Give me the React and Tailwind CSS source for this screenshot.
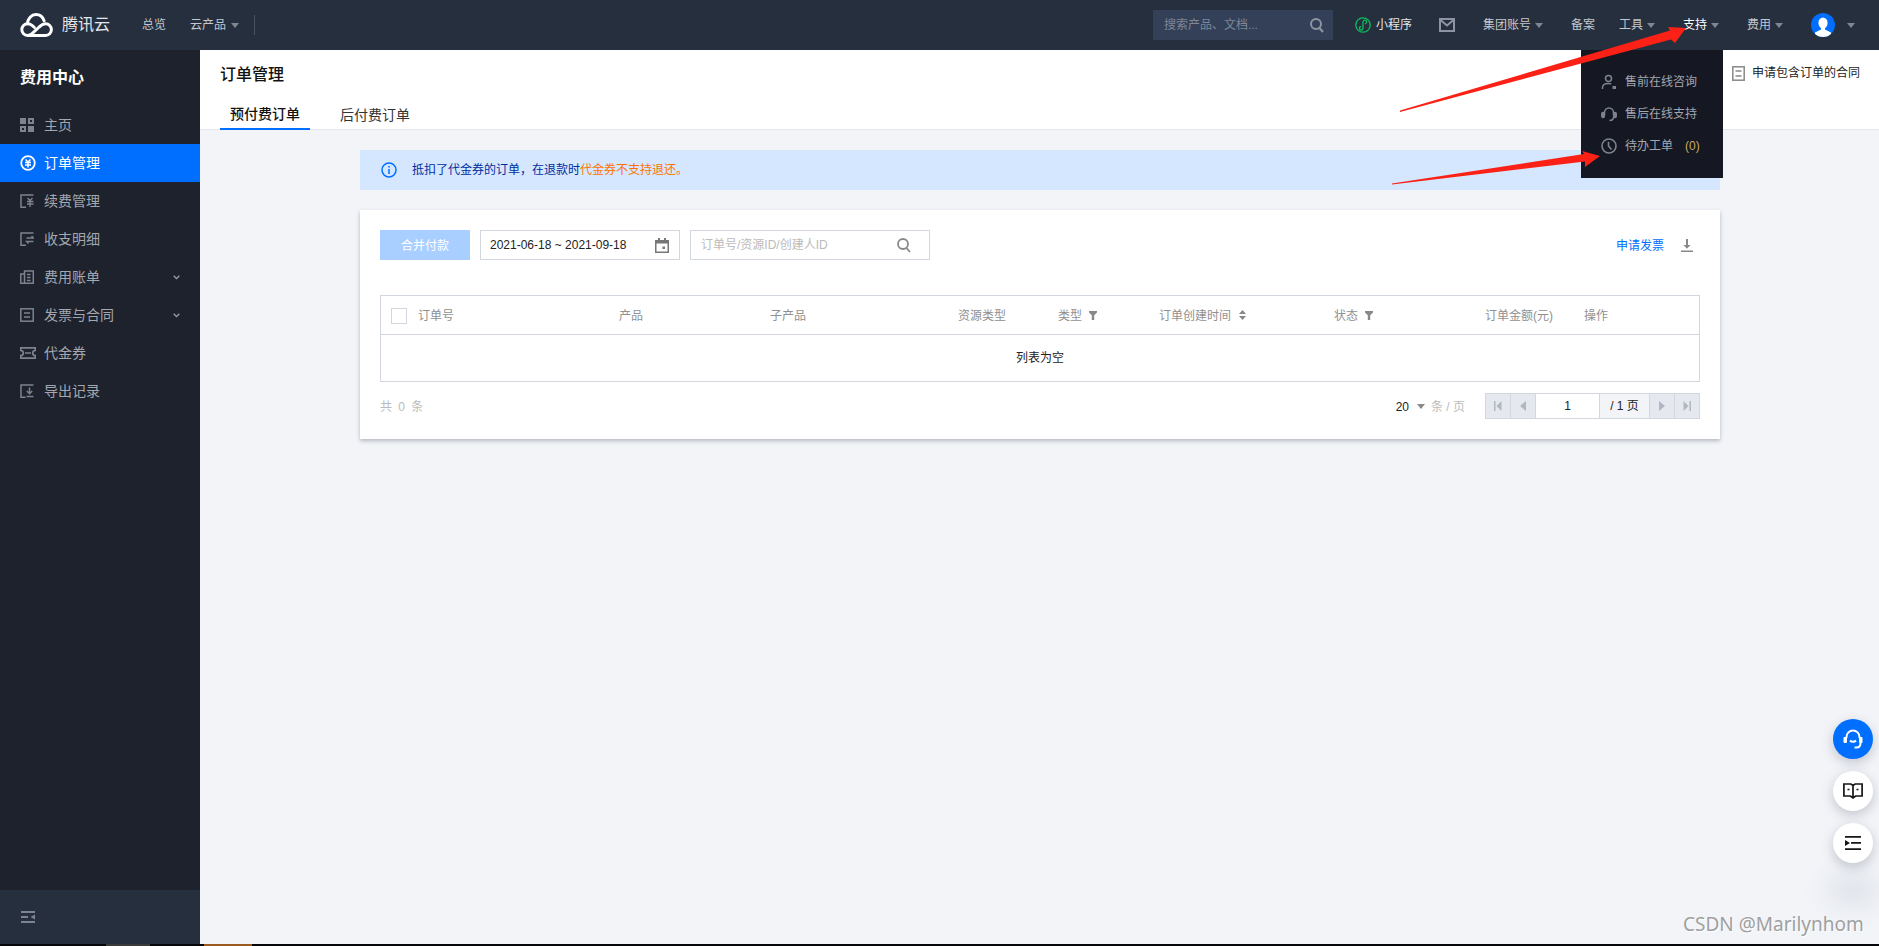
import React from 'react';

const Caret = ({ className = 'border-t-[#7f8691]' }) => (
  <span className={`inline-block w-0 h-0 border-x-[4px] border-x-transparent border-t-[5px] ${className}`} />
);

const Logo = () => (
  <svg width="33" height="24" viewBox="0 0 33 24" fill="none" stroke="white" strokeWidth="3" strokeLinecap="round" strokeLinejoin="round">
    <path d="M7.6 22.4h18a5.8 5.8 0 0 0 0-11.6c-3.2 0-5 1.8-7 3.7l-6.8 6.4c-1.1 1-2.6 1.5-4.2 1.5a5.8 5.8 0 0 1 0-11.6c1.6 0 3 .5 4.4 1.6l2.3 2" />
    <path d="M7.4 10.8C7.8 5.6 11.4 1.6 16 1.6c3.7 0 6.8 2.5 8.1 6.2" />
  </svg>
);

const SideIcon = ({ name }) => {
  const c = '#7d838f';
  if (name === 'home') {
    return (
      <svg width="14" height="14" viewBox="0 0 14 14" fill={c}>
        <rect width="6" height="6" />
        <path fillRule="evenodd" d="M8 0h6v6H8zM10 2v2h2V2z" />
        <path fillRule="evenodd" d="M0 8h6v6H0zM2 10v2h2v-2z" />
        <rect x="8" y="8" width="6" height="6" />
      </svg>
    );
  }
  if (name === 'order') {
    return (
      <svg width="16" height="16" viewBox="0 0 16 16" fill="none" stroke="white">
        <circle cx="8" cy="8" r="6.8" strokeWidth="1.8" />
        <path d="M5.5 4.5 8 7l2.500-2.500M5 7.500h6M5 10h6M8 7v5.500" strokeWidth="1.5" />
      </svg>
    );
  }
  if (name === 'renew') {
    return (
      <svg width="14" height="14" viewBox="0 0 14 14" fill="none" stroke={c} strokeWidth="1.5">
        <path d="M13.5 1H1v12.3h5" />
        <path d="M7.5 4 10 6.5 12.5 4M7 7.5h6.500M7 10h6.500M10 6.500V13" strokeWidth="1.3" />
      </svg>
    );
  }
  if (name === 'detail') {
    return (
      <svg width="14" height="14" viewBox="0 0 14 14" fill="none" stroke={c} strokeWidth="1.5">
        <path d="M13.5 1H1v12.3h5" />
        <path d="M6.5 6h7l-2-2M13.500 9.500h-7l2 2" strokeWidth="1.3" />
      </svg>
    );
  }
  if (name === 'bill') {
    return (
      <svg width="14" height="14" viewBox="0 0 14 14" fill="none" stroke={c} strokeWidth="1.5">
        <path d="M4.5 1h8.800v12.300H.8V4h3.700zM4.500 4v9.300M7 4.500h3.500M7 7.500h3.500M7 10.500h3.500" />
      </svg>
    );
  }
  if (name === 'invoice') {
    return (
      <svg width="14" height="14" viewBox="0 0 14 14" fill="none" stroke={c} strokeWidth="1.5">
        <rect x="0.8" y="0.8" width="12.4" height="12.4" />
        <path d="M4 5h6M4 9h6" />
      </svg>
    );
  }
  if (name === 'voucher') {
    return (
      <svg width="16" height="12" viewBox="0 0 16 12" fill="none" stroke={c} strokeWidth="1.7">
        <path d="M.8.8h14.400v2.700a2.500 2.500 0 0 0 0 5v2.700H.8V8.500a2.500 2.500 0 0 0 0-5zM5 6h6" />
      </svg>
    );
  }
  return (
    <svg width="14" height="14" viewBox="0 0 14 14" fill="none" stroke={c} strokeWidth="1.5">
      <path d="M13.5 1H1v12.3h4.500" />
      <path d="M9.5 3.500V9M6.800 7l2.700 2.700L12.200 7M6.500 12.500h7" />
    </svg>
  );
};

const menu = [
  { name: 'home', label: '主页' },
  { name: 'order', label: '订单管理', active: true },
  { name: 'renew', label: '续费管理' },
  { name: 'detail', label: '收支明细' },
  { name: 'bill', label: '费用账单', arrow: true },
  { name: 'invoice', label: '发票与合同', arrow: true },
  { name: 'voucher', label: '代金券' },
  { name: 'export', label: '导出记录' },
];

const NavItem = ({ label, caret, active, className = '' }) => (
  <div className={`flex items-center gap-1 ${active ? 'text-white' : 'text-[#c3c7ce]'} ${className}`}>
    <span>{label}</span>
    {caret && <Caret />}
  </div>
);

const Filter = () => (
  <svg className="-mt-px" width="8" height="9" viewBox="0 0 8 9" fill="#888">
    <path d="M0 0h8v1.500L5.200 4.200V9H2.800V4.200L0 1.500z" />
  </svg>
);

const PagerBtn = ({ d }) => (
  <div className="w-[25px] h-full flex items-center justify-center bg-[#e5e8ee] border-r border-[#d3d7e0]">
    <svg width="8" height="10" viewBox="0 0 8 10" fill="#b1b6c0">
      <path d={d} />
    </svg>
  </div>
);

const App = () => {
  return (
    <div className="relative w-[1879px] h-[946px] overflow-hidden flex flex-col bg-[#f2f4f8] text-xs text-[#222] font-['Liberation_Sans','Noto_Sans_CJK_SC',sans-serif]">
      {/* top bar */}
      <header className="h-[50px] shrink-0 flex items-center pl-5 bg-[#262f3e] text-[#c3c7ce]">
        <Logo />
        <span className="ml-[9px] text-base text-[#e4e6ea]">腾讯云</span>
        <span className="ml-8">总览</span>
        <span className="ml-6">云产品</span>
        <span className="ml-[5px] flex"><Caret /></span>
        <span className="ml-[15px] w-px h-5 bg-[#4a5364]" />

        <div className="ml-auto flex items-center pr-6">
          <div className="w-[180px] h-[30px] flex items-center justify-between pl-[11px] pr-[9px] bg-[#344058] text-[#7e8797]">
            <span>搜索产品、文档...</span>
            <svg width="14" height="15" viewBox="0 0 14 15" fill="none" stroke="#8d95a3" strokeWidth="2">
              <circle cx="6" cy="6" r="5" />
              <path d="m9.5 10 3.500 4" />
            </svg>
          </div>
          <div className="ml-[22px] flex items-center gap-[5px]">
            <svg width="16" height="16" viewBox="0 0 16 16" fill="none" stroke="#0abf5b" strokeWidth="1.3">
              <circle cx="8" cy="8" r="7.2" />
              <path d="M6 9.500a1.800 1.800 0 1 0 2 1.800V5a1.800 1.800 0 1 1 2 1.800" />
            </svg>
            <span className="text-[#e4e6ea]">小程序</span>
          </div>
          <svg className="ml-[27px]" width="16" height="16" viewBox="0 0 16 16" fill="none" stroke="#8d95a3" strokeWidth="2">
            <rect x="1" y="2" width="14" height="12" />
            <path d="m1.500 3 6.500 5.500L14.500 3" />
          </svg>
          <NavItem className="ml-7" label="集团账号" caret />
          <NavItem className="ml-7" label="备案" />
          <NavItem className="ml-6" label="工具" caret />
          <NavItem className="ml-7" label="支持" caret active />
          <NavItem className="ml-7" label="费用" caret />
          <div className="ml-7 w-6 h-6 rounded-full bg-[#006eff] overflow-hidden">
            <svg width="24" height="24" viewBox="0 0 24 24" fill="white">
              <ellipse cx="12" cy="10" rx="4.6" ry="5.6" />
              <path d="M10 14.500v2L4 19.500V24h16v-4.500l-6-3v-2z" />
            </svg>
          </div>
          <span className="ml-3 flex"><Caret /></span>
        </div>
      </header>

      <div className="flex-1 min-h-0 flex">
        {/* sidebar */}
        <aside className="w-[200px] shrink-0 flex flex-col bg-[#1e222d] text-[#a3a7b0]">
          <div className="h-[56px] flex items-center pl-5 text-base font-bold text-white">费用中心</div>
          <nav>
            {menu.map((item) => (
              <div
                key={item.name}
                className={`h-[38px] flex items-center text-sm ${item.active ? 'bg-[#006eff] text-white' : ''}`}
              >
                <span className="w-[44px] pl-5 flex">
                  <SideIcon name={item.name} />
                </span>
                <span>{item.label}</span>
                {item.arrow && (
                  <svg className="ml-auto mr-5" width="7" height="5" viewBox="0 0 7 5" fill="none" stroke="#9aa0aa" strokeWidth="1.3">
                    <path d="m.7.8 2.800 2.800L6.300.8" />
                  </svg>
                )}
              </div>
            ))}
          </nav>
          <div className="mt-auto h-[54px] flex items-center pl-[21px] bg-[#262f3e]">
            <svg width="14" height="12" viewBox="0 0 14 12" fill="#7d838f">
              <path d="M0 0h14v2H0zM0 5h7v2H0zM0 10h14v2H0zM14 3.500v5L9.500 6z" />
            </svg>
          </div>
        </aside>

        {/* main */}
        <main className="flex-1 min-w-0 flex flex-col">
          <div className="h-20 shrink-0 flex flex-col bg-white border-b border-[#e4e7ed]">
            <div className="flex items-start justify-between pl-5 pr-[19px] pt-[13px]">
              <h1 className="text-base font-medium text-[#111] leading-6">订单管理</h1>
              <div className="flex items-center gap-[7px] h-5">
                <svg width="13" height="15" viewBox="0 0 13 15" fill="none" stroke="#888" strokeWidth="1.5">
                  <rect x="0.8" y="0.8" width="11.4" height="13.4" />
                  <path d="M3.500 5h6M3.500 10h6" />
                </svg>
                <span>申请包含订单的合同</span>
              </div>
            </div>
            <div className="mt-auto -mb-px flex pl-5 text-sm text-[#333]">
              <div className="w-[90px] h-[30px] flex items-center justify-center border-b-2 border-[#006eff] text-[#111] font-medium">预付费订单</div>
              <div className="ml-[30px] h-[30px] flex items-center">后付费订单</div>
            </div>
          </div>

          <div className="mx-[160px] w-[1360px] mt-5 h-10 flex items-center pl-[21px] bg-[#d5e7ff] text-[#002da0]">
            <svg width="16" height="16" viewBox="0 0 16 16" fill="none" stroke="#006eff" strokeWidth="1.5">
              <circle cx="8" cy="8" r="7" />
              <path d="M8 7v5M8 4v1.600" />
            </svg>
            <span className="ml-[15px]">抵扣了代金券的订单，在退款时<span className="text-[#ff7200]">代金券不支持退还。</span></span>
          </div>

          <section className="mx-[160px] w-[1360px] mt-5 h-[229px] px-5 pt-5 bg-white shadow-[0_2px_4px_rgba(54,58,80,0.32)]">
            <div className="h-[30px] flex items-center">
              <button className="w-[90px] h-full pt-px bg-[#a8cfff] text-white">合并付款</button>
              <div className="ml-[10px] w-[200px] h-full flex items-center justify-between pl-[9px] pr-[10px] border border-[#d3d7e0]">
                <span>2021-06-18 ~ 2021-09-18</span>
                <svg width="14" height="15" viewBox="0 0 14 15" fill="#777">
                  <path fillRule="evenodd" d="M3 0h2v2h4V0h2v2h3v13H0V2h3zM1.500 5.500v8h11v-8zM7.500 8.500H10V11H7.500z" />
                </svg>
              </div>
              <div className="ml-[10px] w-[240px] h-full flex items-center justify-between pl-[10px] pr-[18px] border border-[#d3d7e0] text-[#bbb]">
                <span>订单号/资源ID/创建人ID</span>
                <svg width="14" height="15" viewBox="0 0 14 15" fill="none" stroke="#888" strokeWidth="1.8">
                  <circle cx="6" cy="6" r="5" />
                  <path d="m9.500 10 3.500 4" />
                </svg>
              </div>
              <span className="ml-auto pt-px text-[#006eff]">申请发票</span>
              <svg className="ml-[17px] mr-[7px]" width="12" height="13" viewBox="0 0 12 13" fill="#888">
                <path d="M5 0h2v6h2.500L6 9.800 2.500 6H5zM0 11.500h12V13H0z" />
              </svg>
            </div>

            <div className="mt-[35px] border border-[#d3d7e0]">
              <div className="h-[39px] pt-px grid grid-cols-[238px_151px_188px_100px_101px_175px_151px_99px_1fr] items-center border-b border-[#d3d7e0] text-[#909090]">
                <div className="flex items-center pl-[10px]">
                  <span className="w-4 h-4 border border-[#d3d7e0]" />
                  <span className="ml-[11px]">订单号</span>
                </div>
                <div>产品</div>
                <div>子产品</div>
                <div>资源类型</div>
                <div className="flex items-center gap-[7px]">类型<Filter /></div>
                <div className="flex items-center gap-2">
                  订单创建时间
                  <svg className="-mt-px" width="7" height="10" viewBox="0 0 7 10" fill="#888">
                    <path d="M3.500 0 7 4H0zM3.500 10 0 6h7z" />
                  </svg>
                </div>
                <div className="flex items-center gap-[7px]">状态<Filter /></div>
                <div>订单金额(元)</div>
                <div>操作</div>
              </div>
              <div className="h-[46px] flex items-center justify-center">列表为空</div>
            </div>

            <div className="mt-[11px] h-[26px] flex items-center">
              <span className="pt-px text-[#bbb] tracking-[1.5px]">共 0 条</span>
              <span className="ml-auto pt-px">20</span>
              <span className="ml-2 flex"><Caret className="border-t-[#888]" /></span>
              <span className="ml-[6px] pt-px text-[#bbb]">条 / 页</span>
              <div className="ml-5 w-[215px] h-full flex border border-[#d3d7e0]">
                <PagerBtn d="M0 0h1.500v10H0zM7.500 0v10L2.500 5z" />
                <PagerBtn d="M7 0v10L1 5z" />
                <div className="w-[64px] flex items-center justify-center bg-white border-r border-[#d3d7e0]">1</div>
                <div className="w-[50px] flex items-center justify-center bg-[#f2f4f8] border-r border-[#d3d7e0]">/ 1 页</div>
                <PagerBtn d="M1 0v10l6-5z" />
                <div className="flex-1 flex items-center justify-center bg-[#e5e8ee]">
                  <svg width="8" height="10" viewBox="0 0 8 10" fill="#b1b6c0">
                    <path d="M.5 0v10l5-5zM6.500 0H8v10H6.500z" />
                  </svg>
                </div>
              </div>
            </div>
          </section>
        </main>
      </div>

      {/* taskbar sliver at the bottom of the capture */}
      <div className="h-[2px] shrink-0 flex bg-[#05070a]">
        <span className="ml-[106px] w-[44px] bg-[#3a3a3a]" />
        <span className="ml-[54px] w-[48px] bg-[#9a5a20]" />
      </div>

      {/* support dropdown */}
      <div className="absolute left-[1581px] top-[50px] w-[142px] h-[128px] pt-4 pl-5 bg-[#151823] text-[#a3a7b0]">
        <div className="h-8 flex items-center gap-2">
          <svg width="16" height="16" viewBox="0 0 16 16" fill="none" stroke="#7d838f" strokeWidth="1.5">
            <circle cx="7.5" cy="4.5" r="3" />
            <path d="M1.500 15v-1.500c0-2.500 2-4 6-4 1 0 2 .1 2.800.4" />
            <path d="M11.500 12h3.500v3h-3.500z" fill="#7d838f" stroke="none" />
          </svg>
          <span>售前在线咨询</span>
        </div>
        <div className="h-8 flex items-center gap-2">
          <svg width="16" height="16" viewBox="0 0 16 16" fill="none" stroke="#7d838f" strokeWidth="1.5">
            <path d="M3.500 9V6.500a4.500 4.500 0 0 1 9 0V9M12.500 11c0 2-1.500 3.500-4 3.500" />
            <rect x="0.8" y="6.5" width="2.5" height="5" rx="1.2" fill="#7d838f" />
            <rect x="12.700" y="6.5" width="2.5" height="5" rx="1.2" fill="#7d838f" />
          </svg>
          <span>售后在线支持</span>
        </div>
        <div className="h-8 flex items-center gap-2">
          <svg width="16" height="16" viewBox="0 0 16 16" fill="none" stroke="#7d838f" strokeWidth="1.6">
            <circle cx="8" cy="8" r="7" />
            <path d="M7.500 3.800V8l3 3.500" />
          </svg>
          <span>待办工单</span>
          <span className="ml-1 text-[#c9a961]">(0)</span>
        </div>
      </div>

      {/* red annotation arrows */}
      <svg className="absolute inset-0 pointer-events-none" width="1879" height="946" fill="#fb2116">
        <polygon points="1400,110.5 1670,30.5 1668,27 1686,28 1675,43 1671,39.5 1400,112" />
        <polygon points="1392,183.5 1584,154 1582,151 1600,156 1585,167 1585,161.5 1392,184.5" />
      </svg>

      {/* soft shadow left under the floating buttons */}
      <div className="absolute left-[1828px] top-[875px] w-[50px] h-[30px] rounded-full bg-[#dfe2e8] blur-md" />

      {/* floating buttons */}
      <div className="absolute left-[1833px] top-[719px] flex flex-col gap-3">
        <div className="w-10 h-10 rounded-full flex items-center justify-center bg-[#006eff] shadow-[0_4px_12px_rgba(54,58,80,0.25)]">
          <svg width="20" height="20" viewBox="0 0 20 20" fill="none" stroke="white" strokeWidth="2">
            <path d="M3.500 9V8a6.500 6.500 0 0 1 13 0v1M17.500 14c0 3-1.500 4.500-4 4.500h-2M7 11.500c1.500 1.700 4.500 1.700 6 0" />
            <rect x="0.5" y="8" width="3.5" height="6" rx="1" fill="white" stroke="none" />
            <rect x="16" y="8" width="3.5" height="6" rx="1" fill="white" stroke="none" />
          </svg>
        </div>
        <div className="w-10 h-10 rounded-full flex items-center justify-center bg-white shadow-[0_4px_12px_rgba(54,58,80,0.25)]">
          <svg width="20" height="17" viewBox="0 0 20 17" fill="none" stroke="#161616" strokeWidth="1.7">
            <path d="M.9 1h7l2.100 1.500L12.100 1h7v12h-6.500L10 15l-2.600-2H.9zM10 2.500V15" />
            <path d="M4.500 6.500h2M13.500 6.500h2" />
          </svg>
        </div>
        <div className="w-10 h-10 rounded-full flex items-center justify-center bg-white shadow-[0_4px_12px_rgba(54,58,80,0.25)]">
          <svg width="16" height="14" viewBox="0 0 16 14" fill="#161616">
            <path d="M0 0h16v1.800H0zM6 6h10v1.800H6zM0 12.200h16V14H0zM0 4l5 3-5 3z" />
          </svg>
        </div>
      </div>

      {/* watermark */}
      <span className="absolute left-[1683px] top-[912px] text-[19px] leading-6 text-[#a0a0a0] font-['Noto_Sans',sans-serif] [text-shadow:1px_1px_1px_rgba(255,255,255,0.9)]">
        CSDN @Marilynhom
      </span>
    </div>
  );
};

export default App;
